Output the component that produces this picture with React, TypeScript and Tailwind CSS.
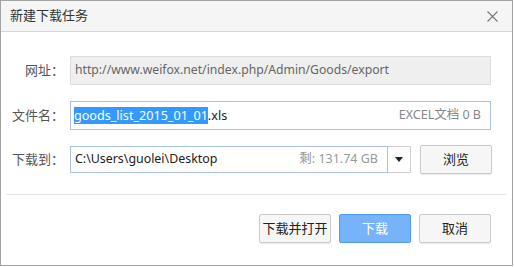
import React from "react";

const font = { fontFamily: '"Noto Sans", "Noto Sans CJK SC", sans-serif' };

function Button({ children, primary }: { children: React.ReactNode; primary?: boolean }) {
  return (
    <button
      className={
        primary
          ? "h-[29px] w-[72px] rounded-[2px] border border-[#4f9bf0] bg-[#76b3fb] text-[13px] text-white"
          : "h-[29px] w-[72px] rounded-[2px] border border-[#c9c9c9] bg-[#f6f6f6] text-[13px] text-[#222] shadow-[0_1px_1px_rgba(0,0,0,0.08)]"
      }
    >
      {children}
    </button>
  );
}

export default function App() {
  return (
    <div className="h-[267px] w-[514px] bg-white" style={font}>
      <div className="flex h-[266px] w-[513px] flex-col border border-[#a3a3a3] bg-white">
        <div className="flex h-[31px] items-center justify-between border-b border-[#d6d6d6] bg-[#f5f5f5] pl-[9px] pr-[14px]">
          <span className="text-[13px] text-[#333]">新建下载任务</span>
          <svg width="11" height="11" viewBox="0 0 11 11">
            <path d="M0.5 0.5L10.5 10.5M10.5 0.5L0.5 10.5" stroke="#777" strokeWidth="1.1" />
          </svg>
        </div>

        <div className="flex flex-col pt-[24px]">
          <div className="flex h-[29px] items-center">
            <label className="w-[69px] pr-[6px] text-right text-[13px] text-[#555]">网址：</label>
            <div className="flex h-[29px] w-[421px] items-center border border-[#dcdcdc] bg-[#efefef] px-[4px] text-[12.2px] text-[#666]">
              http://www.weifox.net/index.php/Admin/Goods/export
            </div>
          </div>

          <div className="mt-[16px] flex h-[29px] items-center">
            <label className="w-[69px] pr-[6px] text-right text-[13px] text-[#555]">文件名：</label>
            <div className="flex h-[29px] w-[421px] items-center justify-between border border-[#a9c2e3] bg-white pl-[3px] pr-[9px]">
              <span className="text-[12.6px] leading-[16px] text-[#222]">
                <span className="bg-[#3399ff] text-white">goods_list_2015_01_01</span>.xls
              </span>
              <span className="text-[12.5px] text-[#888]">EXCEL文档 0 B</span>
            </div>
          </div>

          <div className="mt-[15px] flex h-[29px] items-center">
            <label className="w-[69px] pr-[6px] text-right text-[13px] text-[#555]">下载到：</label>
            <div className="flex h-[27px] w-[318px] items-center justify-between border border-[#a9c2e3] bg-white pl-[4px] pr-[9px]">
              <span className="text-[12.4px] text-[#222]">C:\Users\guolei\Desktop</span>
              <span className="text-[12.5px] text-[#999]">剩: 131.74 GB</span>
            </div>
            <div className="flex h-[27px] w-[23px] items-center justify-center border border-l-0 border-[#d0d0d0] bg-white">
              <svg width="8" height="5" viewBox="0 0 8 5">
                <path d="M0 0H8L4 5Z" fill="#222" />
              </svg>
            </div>
            <div className="ml-[9px]">
              <Button>浏览</Button>
            </div>
          </div>

          <div className="mx-[5px] mt-[20px] border-t border-[#e6e6e6]" />

          <div className="mt-[19px] flex justify-end gap-[8px] pr-[21px]">
            <Button>下载并打开</Button>
            <Button primary>下载</Button>
            <Button>取消</Button>
          </div>
        </div>
      </div>
    </div>
  );
}
